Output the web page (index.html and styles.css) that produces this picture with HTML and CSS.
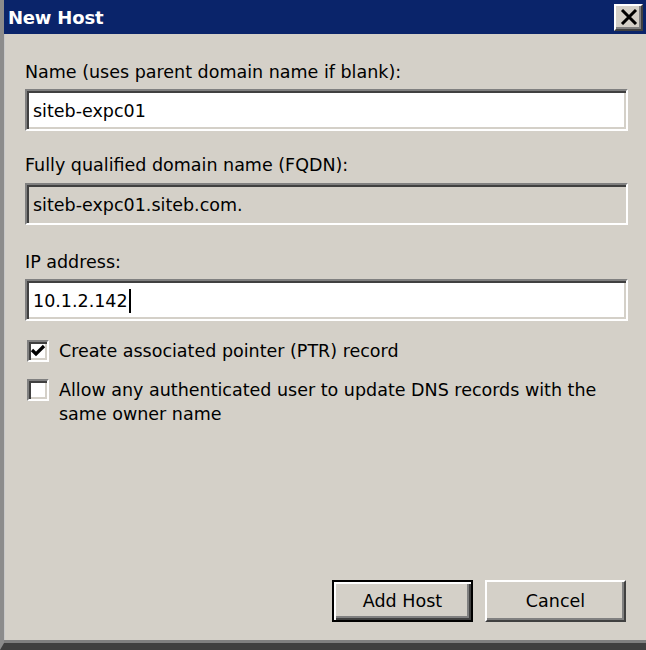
FILE: index.html
```html
<!DOCTYPE html>
<html>
<head>
<meta charset="utf-8">
<link rel="stylesheet" href="styles.css">
</head>
<body>
<div class="window">
  <div class="titlebar">
    <span class="title">New Host</span>
    <button class="close" aria-label="Close">
      <svg width="18" height="16" viewBox="0 0 18 16"><path d="M2 1 L16 15 M16 1 L2 15" stroke="#000" stroke-width="3" fill="none"/></svg>
    </button>
  </div>
  <div class="content">
    <label class="label first">Name (uses parent domain name if blank):</label>
    <div class="field">siteb-expc01</div>
    <label class="label second">Fully qualified domain name (FQDN):</label>
    <div class="field disabled">siteb-expc01.siteb.com.</div>
    <label class="label third">IP address:</label>
    <div class="field">10.1.2.142<span class="caret"></span></div>
    <div class="check first-check">
      <span class="box"><svg width="16" height="14" viewBox="0 0 16 14"><path d="M2 6 L6 10 L14 2" stroke="#000" stroke-width="3.2" fill="none"/></svg></span>
      <span class="check-text">Create associated pointer (PTR) record</span>
    </div>
    <div class="check">
      <span class="box"></span>
      <span class="check-text">Allow any authenticated user to update DNS records with the same owner name</span>
    </div>
    <div class="buttons">
      <button class="btn default">Add Host</button>
      <button class="btn">Cancel</button>
    </div>
  </div>
</div>
</body>
</html>
```
FILE: styles.css
```css
html, body {
  margin: 0;
  padding: 0;
  background: #d4d0c8;
}
.window {
  width: 646px;
  height: 650px;
  box-sizing: border-box;
  background: #d4d0c8;
  border-left: 4px solid #8c8c8c;
  box-shadow: inset 1px 0 0 #c8c8c8;
  border-bottom: 7px solid #404040;
  display: flex;
  flex-direction: column;
  font-family: "DejaVu Sans", Tahoma, sans-serif;
  color: #000;
  position: relative;
}
.window::after {
  content: "";
  position: absolute;
  left: 0;
  right: 0;
  bottom: 0;
  height: 3px;
  background: #808080;
}
.titlebar {
  height: 34px;
  background: #0a246a;
  display: flex;
  align-items: center;
  justify-content: space-between;
  padding: 0 0 0 4px;
}
.title {
  color: #fff;
  font-weight: bold;
  font-size: 18px;
  letter-spacing: -0.2px;
}
.close {
  width: 29px;
  height: 27px;
  margin-right: 3px;
  padding: 0;
  background: #d4d0c8;
  border: 2px solid;
  border-color: #fff #404040 #404040 #fff;
  box-shadow: inset -2px -2px 0 #808080;
  display: flex;
  align-items: center;
  justify-content: center;
}
.content {
  flex: 1;
  display: flex;
  flex-direction: column;
  padding: 0 18px 0 21px;
}
.label {
  font-size: 17.5px;
  line-height: 20px;
  margin: 24px 0 8px 0;
}
.label.first {
  margin-top: 28px;
  margin-bottom: 7px;
}
.label.third {
  margin-top: 27px;
  margin-bottom: 7px;
}
.field {
  height: 42px;
  box-sizing: border-box;
  background: #fff;
  border: 2px solid;
  border-color: #808080 #fff #fff #808080;
  box-shadow: inset 2px 2px 0 #404040, inset -2px -2px 0 #d4d0c8;
  font-size: 17.5px;
  display: flex;
  align-items: center;
  padding: 2px 0 0 6px;
}
.field.disabled {
  background: #d4d0c8;
}
.caret {
  display: inline-block;
  width: 2px;
  height: 24px;
  background: #000;
  margin-left: 1px;
}
.check {
  display: flex;
  align-items: flex-start;
  font-size: 17.5px;
  line-height: 24px;
  margin-top: 16px;
}
.check.first-check {
  margin-top: 19px;
}
.box {
  width: 22px;
  height: 22px;
  flex: none;
  box-sizing: border-box;
  background: #fff;
  border: 2px solid;
  border-color: #808080 #fff #fff #808080;
  box-shadow: inset 2px 2px 0 #404040, inset -2px -2px 0 #d4d0c8;
  margin: 0 10px 0 2px;
  display: flex;
  align-items: center;
  justify-content: center;
}
.check-text {
  margin-top: -1px;
}
.buttons {
  margin-top: auto;
  margin-bottom: 21px;
  margin-right: 2px;
  display: flex;
  justify-content: flex-end;
  gap: 12px;
}
.btn {
  width: 141px;
  height: 42px;
  font-family: "DejaVu Sans", Tahoma, sans-serif;
  font-size: 17.5px;
  color: #000;
  background: #d4d0c8;
  border: 2px solid;
  border-color: #fff #404040 #404040 #fff;
  box-shadow: inset -2px -2px 0 #808080;
  padding: 0;
}
.btn.default {
  border: 2px solid #000;
  box-shadow: inset 2px 2px 0 #fff, inset -2px -2px 0 #404040, inset -4px -4px 0 #808080;
}
```
